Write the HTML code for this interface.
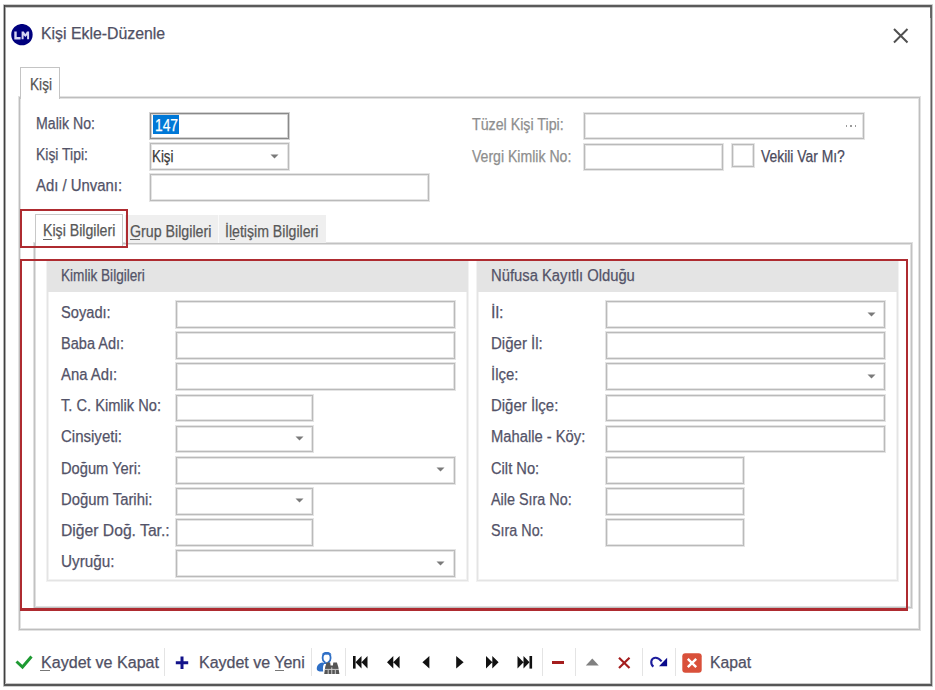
<!DOCTYPE html>
<html><head><meta charset="utf-8"><style>
html,body{margin:0;padding:0;background:#fff;width:935px;height:690px;overflow:hidden}
body{position:relative;font-family:"Liberation Sans",sans-serif}
#root{position:absolute;left:0;top:0;width:935px;height:690px;background:#fff}
.t{position:absolute;white-space:nowrap;transform-origin:0 0;-webkit-text-stroke:0.25px currentColor}
.b{position:absolute;box-sizing:content-box}
</style></head><body><div id="root">
<div class="b" style="left:3px;top:4px;width:930px;height:1px;background:#cfcfcf;"></div>
<div class="b" style="left:4px;top:5px;width:928px;height:2px;background:#5a5a5a;"></div>
<div class="b" style="left:5px;top:7px;width:926px;height:1px;background:#c8c8c8;"></div>
<div class="b" style="left:3px;top:5px;width:1px;height:681px;background:#b4b4b4;"></div>
<div class="b" style="left:4px;top:5px;width:1px;height:681px;background:#404040;"></div>
<div class="b" style="left:5px;top:7px;width:1px;height:677px;background:#a8a8a8;"></div>
<div class="b" style="left:930px;top:7px;width:1px;height:677px;background:#a8a8a8;"></div>
<div class="b" style="left:931px;top:5px;width:1px;height:681px;background:#626262;"></div>
<div class="b" style="left:932px;top:5px;width:1px;height:681px;background:#c4c4c4;"></div>
<div class="b" style="left:930px;top:7px;width:1px;height:11px;background:#6a6a6a;"></div>
<div class="b" style="left:5px;top:683px;width:925px;height:1px;background:#c8c8c8;"></div>
<div class="b" style="left:4px;top:684px;width:928px;height:2px;background:#565656;"></div>
<div class="b" style="left:3px;top:686px;width:930px;height:1px;background:#cfcfcf;"></div>
<svg class="b" style="left:11px;top:24px" width="23" height="23"><circle cx="10.95" cy="10.65" r="10.7" fill="#00007e"/><path d="M3.3 7.4 H5.7 V13.1 H9.6 V15.4 H3.3 Z M10.6 15.2 V7.6 H12.7 L14.35 9.9 L16 7.6 H18.1 V15.2 H16.1 V11.2 L14.35 13 L12.6 11.2 V15.2 Z" fill="#d6d6f2"/></svg>
<div class="t" style="left:41.10px;top:25.86px;font-size:16px;line-height:16px;color:#505064;transform:scaleX(0.9904);">Kişi Ekle-Düzenle</div>
<svg class="b" style="left:892px;top:26.5px" width="18" height="18"><path d="M2 2 L15.5 15.5 M15.5 2 L2 15.5" stroke="#505050" stroke-width="2"/></svg>
<div class="b" style="left:19px;top:97px;width:899px;height:531px;border:1px solid #bebebe;background:transparent;box-shadow:0 0 0 1px #e2e2e2,inset 0 0 0 1px #e2e2e2;"></div>
<div class="b" style="left:20px;top:67px;width:38px;height:31px;border:1px solid #c4c4c4;border-bottom:none;background:#fff"></div>
<div class="t" style="left:29.80px;top:76.96px;font-size:16px;line-height:16px;color:#555;transform:scaleX(0.8527);">Kişi</div>
<div class="t" style="left:35.90px;top:116.36px;font-size:16px;line-height:16px;color:#535368;transform:scaleX(0.8846);">Malik No:</div>
<div class="t" style="left:35.70px;top:146.96px;font-size:16px;line-height:16px;color:#535368;transform:scaleX(0.8708);">Kişi Tipi:</div>
<div class="t" style="left:35.70px;top:178.26px;font-size:16px;line-height:16px;color:#535368;transform:scaleX(0.9308);">Adı / Unvanı:</div>
<div class="b" style="left:150px;top:113px;width:137px;height:24px;border:1px solid #8a8a8a;background:#fff;box-shadow:0 0 0 1px #d2d2d2,inset 0 0 0 1px #d2d2d2;"></div>
<div class="b" style="left:153px;top:115px;width:26px;height:19px;background:#0078d7;"></div>
<div class="t" style="left:154.50px;top:117.96px;font-size:16px;line-height:16px;color:#fff;transform:scaleX(0.8614);">147</div>
<div class="b" style="left:150px;top:143px;width:137px;height:25px;border:1px solid #bababa;background:#fff;box-shadow:0 0 0 1px #e4e4e4,inset 0 0 0 1px #e4e4e4;"></div>
<div class="t" style="left:152.20px;top:148.96px;font-size:16px;line-height:16px;color:#3a3a3a;transform:scaleX(0.8333);">Kişi</div>
<svg class="b" style="left:269.5px;top:154.2px" width="9" height="5"><path d="M0.5 0.5 L8.5 0.5 L4.5 4.5 Z" fill="#7a7a7a"/></svg>
<div class="b" style="left:150px;top:174px;width:277px;height:25px;border:1px solid #bababa;background:#fff;box-shadow:0 0 0 1px #e4e4e4,inset 0 0 0 1px #e4e4e4;"></div>
<div class="t" style="left:472.00px;top:117.06px;font-size:16px;line-height:16px;color:#8e8e8e;transform:scaleX(0.8885);">Tüzel Kişi Tipi:</div>
<div class="t" style="left:472.00px;top:148.76px;font-size:16px;line-height:16px;color:#8e8e8e;transform:scaleX(0.8795);">Vergi Kimlik No:</div>
<div class="b" style="left:584px;top:113px;width:278px;height:24px;border:1px solid #bababa;background:#fff;box-shadow:0 0 0 1px #e4e4e4,inset 0 0 0 1px #e4e4e4;"></div>
<div class="b" style="left:845.6px;top:125px;width:1.5px;height:1.5px;background:#9a9a9a"></div>
<div class="b" style="left:850.1px;top:125px;width:1.5px;height:1.5px;background:#9a9a9a"></div>
<div class="b" style="left:854.6px;top:125px;width:1.5px;height:1.5px;background:#9a9a9a"></div>
<div class="b" style="left:584px;top:144px;width:137px;height:24px;border:1px solid #bababa;background:#fff;box-shadow:0 0 0 1px #e4e4e4,inset 0 0 0 1px #e4e4e4;"></div>
<div class="b" style="left:732px;top:144px;width:20px;height:21px;border:1px solid #bababa;background:#fff;box-shadow:0 0 0 1px #e4e4e4,inset 0 0 0 1px #e4e4e4;"></div>
<div class="t" style="left:760.60px;top:149.06px;font-size:16px;line-height:16px;color:#4a4a5c;transform:scaleX(0.8675);">Vekili Var Mı?</div>
<div class="b" style="left:34px;top:243px;width:876px;height:363px;border:1px solid #c2c2c2;background:transparent;box-shadow:0 0 0 1px #e0e0e0,inset 0 0 0 1px #e0e0e0;"></div>
<div class="b" style="left:125px;top:215px;width:93px;height:28px;background:#efefef"></div>
<div class="b" style="left:218px;top:215px;width:107px;height:28px;background:#efefef;border-left:1px solid #fafafa"></div>
<div class="b" style="left:35px;top:214px;width:86px;height:31px;border:1px solid #c8c8c8;border-bottom:none;background:#fff"></div>
<div class="t" style="left:43.00px;top:222.96px;font-size:16px;line-height:16px;color:#585858;transform:scaleX(0.8839);">Kişi Bilgileri</div>
<div class="b" style="left:43px;top:239px;width:9px;height:1px;background:#666;"></div>
<div class="t" style="left:129.90px;top:223.56px;font-size:16px;line-height:16px;color:#585858;transform:scaleX(0.8886);">Grup Bilgileri</div>
<div class="b" style="left:130px;top:239px;width:10px;height:1px;background:#666;"></div>
<div class="t" style="left:225.40px;top:223.56px;font-size:16px;line-height:16px;color:#585858;transform:scaleX(0.8828);">İletişim Bilgileri</div>
<div class="b" style="left:230px;top:239px;width:5px;height:1px;background:#666;"></div>
<div class="b" style="left:47px;top:261px;width:419px;height:318px;border:1px solid #e4e4e4;background:#fff;box-shadow:0 0 0 1px #f2f2f2,inset 0 0 0 1px #f2f2f2;"></div>
<div class="b" style="left:47px;top:262px;width:421px;height:30px;background:#e4e4e4;"></div>
<div class="t" style="left:61.20px;top:267.86px;font-size:16px;line-height:16px;color:#535368;transform:scaleX(0.8501);">Kimlik Bilgileri</div>
<div class="b" style="left:477px;top:261px;width:419px;height:318px;border:1px solid #e4e4e4;background:#fff;box-shadow:0 0 0 1px #f2f2f2,inset 0 0 0 1px #f2f2f2;"></div>
<div class="b" style="left:477px;top:262px;width:421px;height:30px;background:#e4e4e4;"></div>
<div class="t" style="left:491.00px;top:267.86px;font-size:16px;line-height:16px;color:#535368;transform:scaleX(0.9242);">Nüfusa Kayıtlı Olduğu</div>
<div class="t" style="left:60.90px;top:304.76px;font-size:16px;line-height:16px;color:#535368;transform:scaleX(0.9153);">Soyadı:</div>
<div class="b" style="left:176px;top:301px;width:277px;height:25px;border:1px solid #bababa;background:#fff;box-shadow:0 0 0 1px #e4e4e4,inset 0 0 0 1px #e4e4e4;"></div>
<div class="t" style="left:60.90px;top:335.91px;font-size:16px;line-height:16px;color:#535368;transform:scaleX(0.9092);">Baba Adı:</div>
<div class="b" style="left:176px;top:332px;width:277px;height:25px;border:1px solid #bababa;background:#fff;box-shadow:0 0 0 1px #e4e4e4,inset 0 0 0 1px #e4e4e4;"></div>
<div class="t" style="left:60.90px;top:367.06px;font-size:16px;line-height:16px;color:#535368;transform:scaleX(0.9289);">Ana Adı:</div>
<div class="b" style="left:176px;top:363px;width:277px;height:25px;border:1px solid #bababa;background:#fff;box-shadow:0 0 0 1px #e4e4e4,inset 0 0 0 1px #e4e4e4;"></div>
<div class="t" style="left:60.90px;top:398.21px;font-size:16px;line-height:16px;color:#535368;transform:scaleX(0.9149);">T. C. Kimlik No:</div>
<div class="b" style="left:176px;top:395px;width:135px;height:24px;border:1px solid #bababa;background:#fff;box-shadow:0 0 0 1px #e4e4e4,inset 0 0 0 1px #e4e4e4;"></div>
<div class="t" style="left:60.90px;top:429.36px;font-size:16px;line-height:16px;color:#535368;transform:scaleX(0.9384);">Cinsiyeti:</div>
<div class="b" style="left:176px;top:426px;width:135px;height:24px;border:1px solid #bababa;background:#fff;box-shadow:0 0 0 1px #e4e4e4,inset 0 0 0 1px #e4e4e4;"></div>
<svg class="b" style="left:294.8px;top:436.1px" width="9" height="5"><path d="M0.5 0.5 L8.5 0.5 L4.5 4.5 Z" fill="#7a7a7a"/></svg>
<div class="t" style="left:60.90px;top:460.51px;font-size:16px;line-height:16px;color:#535368;transform:scaleX(0.9174);">Doğum Yeri:</div>
<div class="b" style="left:176px;top:457px;width:277px;height:25px;border:1px solid #bababa;background:#fff;box-shadow:0 0 0 1px #e4e4e4,inset 0 0 0 1px #e4e4e4;"></div>
<svg class="b" style="left:436.2px;top:467.2px" width="9" height="5"><path d="M0.5 0.5 L8.5 0.5 L4.5 4.5 Z" fill="#7a7a7a"/></svg>
<div class="t" style="left:60.90px;top:491.66px;font-size:16px;line-height:16px;color:#535368;transform:scaleX(0.9278);">Doğum Tarihi:</div>
<div class="b" style="left:176px;top:488px;width:135px;height:25px;border:1px solid #bababa;background:#fff;box-shadow:0 0 0 1px #e4e4e4,inset 0 0 0 1px #e4e4e4;"></div>
<svg class="b" style="left:294.8px;top:498.4px" width="9" height="5"><path d="M0.5 0.5 L8.5 0.5 L4.5 4.5 Z" fill="#7a7a7a"/></svg>
<div class="t" style="left:60.90px;top:522.81px;font-size:16px;line-height:16px;color:#535368;transform:scaleX(0.9802);">Diğer Doğ. Tar.:</div>
<div class="b" style="left:176px;top:519px;width:135px;height:25px;border:1px solid #bababa;background:#fff;box-shadow:0 0 0 1px #e4e4e4,inset 0 0 0 1px #e4e4e4;"></div>
<div class="t" style="left:60.90px;top:553.96px;font-size:16px;line-height:16px;color:#535368;transform:scaleX(0.9536);">Uyruğu:</div>
<div class="b" style="left:176px;top:550px;width:277px;height:25px;border:1px solid #bababa;background:#fff;box-shadow:0 0 0 1px #e4e4e4,inset 0 0 0 1px #e4e4e4;"></div>
<svg class="b" style="left:436.2px;top:560.7px" width="9" height="5"><path d="M0.5 0.5 L8.5 0.5 L4.5 4.5 Z" fill="#7a7a7a"/></svg>
<div class="t" style="left:491.10px;top:304.76px;font-size:16px;line-height:16px;color:#535368;transform:scaleX(1.0081);">İl:</div>
<div class="b" style="left:606px;top:301px;width:277px;height:25px;border:1px solid #bababa;background:#fff;box-shadow:0 0 0 1px #e4e4e4,inset 0 0 0 1px #e4e4e4;"></div>
<svg class="b" style="left:866.7px;top:311.7px" width="9" height="5"><path d="M0.5 0.5 L8.5 0.5 L4.5 4.5 Z" fill="#7a7a7a"/></svg>
<div class="t" style="left:491.10px;top:335.91px;font-size:16px;line-height:16px;color:#535368;transform:scaleX(0.9383);">Diğer İl:</div>
<div class="b" style="left:606px;top:332px;width:277px;height:25px;border:1px solid #bababa;background:#fff;box-shadow:0 0 0 1px #e4e4e4,inset 0 0 0 1px #e4e4e4;"></div>
<div class="t" style="left:491.10px;top:367.06px;font-size:16px;line-height:16px;color:#535368;transform:scaleX(0.9317);">İlçe:</div>
<div class="b" style="left:606px;top:363px;width:277px;height:25px;border:1px solid #bababa;background:#fff;box-shadow:0 0 0 1px #e4e4e4,inset 0 0 0 1px #e4e4e4;"></div>
<svg class="b" style="left:866.7px;top:374.0px" width="9" height="5"><path d="M0.5 0.5 L8.5 0.5 L4.5 4.5 Z" fill="#7a7a7a"/></svg>
<div class="t" style="left:491.10px;top:398.21px;font-size:16px;line-height:16px;color:#535368;transform:scaleX(0.9347);">Diğer İlçe:</div>
<div class="b" style="left:606px;top:395px;width:277px;height:24px;border:1px solid #bababa;background:#fff;box-shadow:0 0 0 1px #e4e4e4,inset 0 0 0 1px #e4e4e4;"></div>
<div class="t" style="left:491.10px;top:429.36px;font-size:16px;line-height:16px;color:#535368;transform:scaleX(0.9218);">Mahalle - Köy:</div>
<div class="b" style="left:606px;top:426px;width:277px;height:24px;border:1px solid #bababa;background:#fff;box-shadow:0 0 0 1px #e4e4e4,inset 0 0 0 1px #e4e4e4;"></div>
<div class="t" style="left:491.10px;top:460.51px;font-size:16px;line-height:16px;color:#535368;transform:scaleX(0.9181);">Cilt No:</div>
<div class="b" style="left:606px;top:457px;width:136px;height:25px;border:1px solid #bababa;background:#fff;box-shadow:0 0 0 1px #e4e4e4,inset 0 0 0 1px #e4e4e4;"></div>
<div class="t" style="left:491.10px;top:491.66px;font-size:16px;line-height:16px;color:#535368;transform:scaleX(0.8976);">Aile Sıra No:</div>
<div class="b" style="left:606px;top:488px;width:136px;height:25px;border:1px solid #bababa;background:#fff;box-shadow:0 0 0 1px #e4e4e4,inset 0 0 0 1px #e4e4e4;"></div>
<div class="t" style="left:491.10px;top:522.81px;font-size:16px;line-height:16px;color:#535368;transform:scaleX(0.8961);">Sıra No:</div>
<div class="b" style="left:606px;top:519px;width:136px;height:25px;border:1px solid #bababa;background:#fff;box-shadow:0 0 0 1px #e4e4e4,inset 0 0 0 1px #e4e4e4;"></div>
<div class="b" style="left:20px;top:209px;width:104px;height:35px;border:2px solid #ae2b30"></div>
<div class="b" style="left:20px;top:259px;width:884px;height:347px;border:2px solid #ae2b30;border-bottom-width:3px"></div>
<svg class="b" style="left:14px;top:654px" width="20" height="16"><path d="M2.5 7.5 L8.5 13 L17.5 2.5" stroke="#1e9a32" stroke-width="3" fill="none"/></svg>
<div class="t" style="left:40.50px;top:655.16px;font-size:16px;line-height:16px;color:#505064;transform:scaleX(1.0051);">Kaydet ve Kapat</div>
<div class="b" style="left:40px;top:670px;width:10px;height:1px;background:#777;"></div>
<div class="b" style="left:164px;top:648px;width:1px;height:28px;background:#e4e4e4;"></div>
<svg class="b" style="left:175px;top:656px" width="15" height="14"><path d="M7 0.5 V13 M0.8 6.8 H13.2" stroke="#12128a" stroke-width="3"/></svg>
<div class="t" style="left:198.60px;top:655.16px;font-size:16px;line-height:16px;color:#505064;transform:scaleX(0.9991);">Kaydet ve Yeni</div>
<div class="b" style="left:275px;top:670px;width:9px;height:1px;background:#777;"></div>
<div class="b" style="left:311px;top:648px;width:1px;height:28px;background:#e4e4e4;"></div>
<svg class="b" style="left:312px;top:648px" width="32" height="30">
<g transform="translate(0.3 1.2)"><path d="M10.3 8.8 C10.3 5.6 12 3.9 14.3 3.9 C16.6 3.9 18.3 5.6 18.3 8.8 C18.3 10.8 17.4 12.2 16.3 12.8 L16.5 14 L12.2 14 L12.3 12.8 C11.2 12.2 10.3 10.8 10.3 8.8 Z" fill="none" stroke="#2e6fc6" stroke-width="1.8"/>
<path d="M9.4 5.6 C10.5 3.2 12.5 2.8 14.3 2.8 C16.2 2.8 18.2 3.2 19.2 5.6 C17.5 5.2 16 5.6 14.3 5.6 C12.6 5.6 11 5.2 9.4 5.6 Z" fill="#2e6fc6"/></g>
<path d="M4.8 21.2 C4.6 17.6 6.6 15 10.6 14.4 L12.4 15.6 C11 17.2 10.6 20.2 11.2 23.4 C8.2 23.8 4.9 23.2 4.8 21.2 Z" fill="#2e6fc6"/>
<path d="M12.2 26 L13.2 19 L14.6 14.4 L18.2 14.4 L18.6 17.4 L20.9 17.4 L21.3 14.4 L24.9 14.4 L26.3 19 L27.4 26 Z" fill="#555"/>
<path d="M12.8 21.4 H27 M19.75 19.4 V26 M16.2 22 V26 M23.3 22 V26" stroke="#d8d8d8" stroke-width="0.9"/>
</svg>
<div class="b" style="left:345px;top:648px;width:1px;height:28px;background:#e4e4e4;"></div>
<svg class="b" style="left:352px;top:655px" width="18" height="15"><rect x="1" y="1" width="2.6" height="12.6" fill="#111"/><path d="M3.5 7.3 L9.5 1 V13.6 Z M9.5 7.3 L15.5 1 V13.6 Z" fill="#111"/></svg>
<svg class="b" style="left:386px;top:655px" width="16" height="15"><path d="M1 7.3 L7.3 1 V13.6 Z M7.3 7.3 L13.6 1 V13.6 Z" fill="#111"/></svg>
<svg class="b" style="left:421px;top:655px" width="10" height="15"><path d="M1.4 7.3 L8.4 1 V13.6 Z" fill="#111"/></svg>
<svg class="b" style="left:455px;top:655px" width="10" height="15"><path d="M8.6 7.3 L1.2 1 V13.6 Z" fill="#111"/></svg>
<svg class="b" style="left:485px;top:655px" width="16" height="15"><path d="M13.6 7.3 L7.3 1 V13.6 Z M7.3 7.3 L1 1 V13.6 Z" fill="#111"/></svg>
<svg class="b" style="left:516px;top:655px" width="18" height="15"><rect x="13.5" y="1" width="2.6" height="12.6" fill="#111"/><path d="M13.5 7.3 L7.5 1 V13.6 Z M7.5 7.3 L1.5 1 V13.6 Z" fill="#111"/></svg>
<div class="b" style="left:542px;top:648px;width:1px;height:28px;background:#e4e4e4;"></div>
<div class="b" style="left:552px;top:661px;width:12px;height:3px;background:#a41d1d;"></div>
<div class="b" style="left:575px;top:648px;width:1px;height:28px;background:#e4e4e4;"></div>
<svg class="b" style="left:585px;top:657px" width="15" height="10"><path d="M0.8 8.6 L7.3 1.5 L13.8 8.6 Z" fill="#808080"/></svg>
<svg class="b" style="left:617px;top:656px" width="15" height="14"><path d="M2 1.8 L12.5 12 M12.5 1.8 L2 12" stroke="#a41d1d" stroke-width="2.2"/></svg>
<div class="b" style="left:642px;top:648px;width:1px;height:28px;background:#e4e4e4;"></div>
<svg class="b" style="left:649px;top:655px" width="20" height="14"><path d="M4.4 11.6 C1.2 9.2 1.4 3.2 6.2 2.7 C8.7 2.5 10.6 4 12.6 6.4" stroke="#1c1c9c" stroke-width="2.1" fill="none"/><path d="M18.1 2.8 V11.2 H10.0 Z" fill="#0a0a8c"/></svg>
<div class="b" style="left:675px;top:648px;width:1px;height:28px;background:#e4e4e4;"></div>
<svg class="b" style="left:682px;top:653px" width="20" height="20"><rect x="0.3" y="0.3" width="19.4" height="19.4" rx="3" fill="#d9503a"/><path d="M5.8 5.8 L14.2 14.2 M14.2 5.8 L5.8 14.2" stroke="#fff" stroke-width="2.4"/></svg>
<div class="t" style="left:709.80px;top:655.16px;font-size:16px;line-height:16px;color:#505064;transform:scaleX(0.9833);">Kapat</div>
</div></body></html>
